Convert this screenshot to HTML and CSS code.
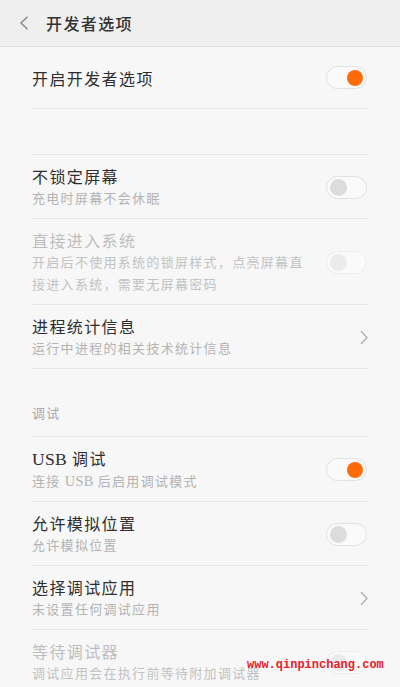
FILE: index.html
```html
<!DOCTYPE html>
<html lang="zh-CN">
<head>
<meta charset="utf-8">
<title>开发者选项</title>
<link rel="stylesheet" href="styles.css">
</head>
<body>
<div class="screen">
  <header class="topbar">
    <svg class="back" width="10" height="14" viewBox="0 0 10 14"><polyline points="8.5,0.8 2,7 8.5,13.2" fill="none" stroke="#8a8a8a" stroke-width="1.5"/></svg>
    <span class="topbar-title">开发者选项</span>
  </header>

  <div class="list">
    <div class="row row-main">
      <div class="texts"><div class="title">开启开发者选项</div></div>
      <span class="switch on"><span class="knob"></span></span>
    </div>

    <div class="spacer"></div>

    <div class="row">
      <div class="texts">
        <div class="title">不锁定屏幕</div>
        <div class="sub">充电时屏幕不会休眠</div>
      </div>
      <span class="switch"><span class="knob"></span></span>
    </div>

    <div class="row disabled">
      <div class="texts">
        <div class="title">直接进入系统</div>
        <div class="sub">开启后不使用系统的锁屏样式，点亮屏幕直接进入系统，需要无屏幕密码</div>
      </div>
      <span class="switch"><span class="knob"></span></span>
    </div>

    <div class="row">
      <div class="texts">
        <div class="title">进程统计信息</div>
        <div class="sub">运行中进程的相关技术统计信息</div>
      </div>
      <svg class="chev" width="8" height="15" viewBox="0 0 8 15"><polyline points="1,1 7,7.5 1,14" fill="none" stroke="#ababab" stroke-width="1.2"/></svg>
    </div>

    <div class="section">调试</div>

    <div class="row">
      <div class="texts">
        <div class="title"><span class="latin">USB</span> 调试</div>
        <div class="sub">连接 <span class="latin">USB</span> 后启用调试模式</div>
      </div>
      <span class="switch on"><span class="knob"></span></span>
    </div>

    <div class="row">
      <div class="texts">
        <div class="title">允许模拟位置</div>
        <div class="sub">允许模拟位置</div>
      </div>
      <span class="switch"><span class="knob"></span></span>
    </div>

    <div class="row">
      <div class="texts">
        <div class="title">选择调试应用</div>
        <div class="sub">未设置任何调试应用</div>
      </div>
      <svg class="chev" width="8" height="15" viewBox="0 0 8 15"><polyline points="1,1 7,7.5 1,14" fill="none" stroke="#ababab" stroke-width="1.2"/></svg>
    </div>

    <div class="row disabled">
      <div class="texts">
        <div class="title">等待调试器</div>
        <div class="sub">调试应用会在执行前等待附加调试器</div>
      </div>
      <span class="switch"><span class="knob"></span></span>
    </div>
  </div>

  <div class="watermark">www.qinpinchang.com</div>
</div>
</body>
</html>
```

FILE: styles.css
```css
html, body {
  margin: 0;
  padding: 0;
  background: #f7f7f7;
}
body {
  font-family: "Noto Sans CJK SC", "Noto Sans", sans-serif;
  overflow: hidden;
}
.screen {
  position: relative;
  width: 400px;
  height: 687px;
  overflow: hidden;
  background: #f7f7f7;
}
.topbar {
  height: 47px;
  background: #efefef;
  border-bottom: 1px solid #e0e0e0;
  box-sizing: border-box;
  display: flex;
  align-items: center;
  padding-left: 19px;
}
.back {
  display: block;
  margin-right: 17px;
}
.topbar-title {
  font-size: 16px;
  letter-spacing: 1.4px;
  color: #333;
  font-weight: 500;
  line-height: 22px;
}
.list {
  margin: 0 32px;
}
.row {
  display: flex;
  align-items: center;
  justify-content: space-between;
  padding: 10px 0 9px;
  border-bottom: 1px solid #e6e6e6;
}
.row-main {
  padding: 19px 0 19px;
}
.spacer {
  height: 45px;
  border-bottom: 1px solid #e6e6e6;
}
.texts {
  flex: 1;
  min-width: 0;
  padding-right: 14px;
}
.title {
  font-size: 16px;
  line-height: 22px;
  letter-spacing: 1.4px;
  color: #2e2e2e;
}
.sub {
  font-size: 13px;
  line-height: 22px;
  letter-spacing: 1.3px;
  color: #b3b3b3;
}
.latin {
  font-family: "Liberation Serif", serif;
  font-size: 1.1em;
  letter-spacing: 0.3px;
}
.disabled .title {
  color: #bdbdbd;
}
.disabled .sub {
  color: #c2c2c2;
}
.section {
  padding: 34px 0 13px;
  font-size: 13px;
  line-height: 20px;
  letter-spacing: 1.3px;
  color: #aaaaaa;
  border-bottom: 1px solid #e6e6e6;
}
.switch {
  flex: none;
  width: 41px;
  height: 23px;
  box-sizing: border-box;
  border: 1px solid #e1e1e1;
  border-radius: 12px;
  background: #fafafa;
  display: flex;
  align-items: center;
  padding: 0 3px;
  margin-right: 1px;
}
.knob {
  width: 17px;
  height: 17px;
  border-radius: 50%;
  background: #dcdcdc;
}
.switch.on {
  justify-content: flex-end;
}
.switch.on .knob {
  width: 16px;
  height: 16px;
  background: #ff6a0a;
}
.disabled .switch {
  border-color: #ececec;
}
.disabled .knob {
  background: #ebebeb;
}
.chev {
  flex: none;
  display: block;
  margin-right: 0;
}
.watermark {
  position: absolute;
  left: 247px;
  top: 656px;
  font-family: "Liberation Mono", monospace;
  font-size: 12px;
  font-weight: bold;
  line-height: 18px;
  color: #e8202a;
}
```
